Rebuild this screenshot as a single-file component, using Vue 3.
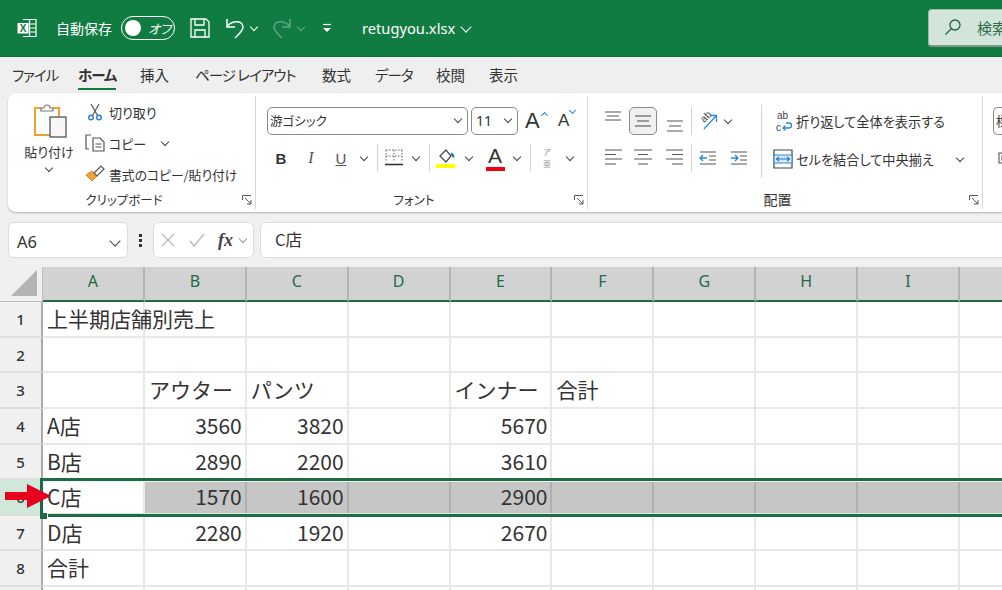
<script setup>
// tab widths keep each label at the start it has in the Excel ribbon
const tabs = [
  { label: 'ファイル', width: 66, kana: true },
  { label: 'ホーム', width: 62, kana: true, active: true },
  { label: '挿入', width: 55 },
  { label: 'ページ レイアウト', width: 127, kana: true },
  { label: '数式', width: 53 },
  { label: 'データ', width: 61, kana: true },
  { label: '校閲', width: 53 },
  { label: '表示', width: 53 }
];

const columns = ['A', 'B', 'C', 'D', 'E', 'F', 'G', 'H', 'I', 'J'];

const rows = [
  ['上半期店舗別売上'],
  [],
  ['', 'アウター', 'パンツ', '', 'インナー', '合計'],
  ['A店', 3560, 3820, '', 5670],
  ['B店', 2890, 2200, '', 3610],
  ['C店', 1570, 1600, '', 2900],
  ['D店', 2280, 1920, '', 2670],
  ['合計'],
  []
];

const SELECTED_ROW = 5;

const cellAt = (row, col) => {
  const value = rows[row][col];
  return value === undefined ? '' : value;
};
</script>

<template>
  <div class="app">
    <header class="titlebar">
      <svg class="t-excel" viewBox="0 0 20 20" width="20" height="20">
        <path d="M6 1.5h13v17H6M12.500 1.500v17M12.500 6h6.500M12.500 10h6.500M12.500 14h6.500" fill="none" stroke="#fff" stroke-width="1.200" />
        <rect x="0.500" y="5" width="11" height="10.500" fill="#fff" />
        <text x="6" y="14" text-anchor="middle" class="t-excel-x">X</text>
      </svg>
      <span class="t-autosave">自動保存</span>
      <div class="toggle">
        <i class="knob"></i>
        <span>オフ</span>
      </div>
      <svg class="t-save" viewBox="0 0 20 20" width="20" height="20">
        <path d="M1 1h15l3 3v15H1zM5 1v6h9V1M5 19v-7h10v7" fill="none" stroke="#fff" stroke-width="1.300" />
      </svg>
      <svg class="t-undo" viewBox="0 0 20 22" width="20" height="22">
        <path d="M2 2v8h8M2 10C5 4 18 2 18 10c0 4-4 7-8 11" fill="none" stroke="#fff" stroke-width="1.500" />
      </svg>
      <i class="chev chev-white t-chev1"></i>
      <svg class="t-redo" viewBox="0 0 20 22" width="20" height="22">
        <path d="M18 2v8h-8M18 10C15 4 2 2 2 10c0 4 4 7 8 11" fill="none" stroke="#5da884" stroke-width="1.500" />
      </svg>
      <i class="chev chev-dim t-chev2"></i>
      <svg class="t-qat" viewBox="0 0 10 10" width="10" height="10">
        <path d="M1 1.500h8" stroke="#fff" stroke-width="1.200" />
        <path d="M1 5h8L5 9z" fill="#fff" />
      </svg>
      <span class="t-file">retugyou.xlsx</span>
      <i class="chev chev-white chev-big t-chev3"></i>
      <div class="search">
        <svg viewBox="0 0 18 18" width="18" height="18">
          <circle cx="11" cy="7" r="5" fill="none" stroke="#24613f" stroke-width="1.300" />
          <path d="M7.500 10.500L1.500 16.500" stroke="#24613f" stroke-width="1.300" />
        </svg>
        <span>検索</span>
      </div>
    </header>

    <nav class="tabs">
      <div v-for="tab in tabs" :key="tab.label" class="tab" :style="{ width: tab.width + 'px' }">
        <span :class="{ active: tab.active, kana: tab.kana }">{{ tab.label }}</span>
      </div>
    </nav>

    <section class="ribbon">
      <div class="group g-clip">
        <div class="clip-body">
          <div class="paste">
            <svg viewBox="0 0 34 36" width="34" height="36">
              <path d="M8 4H2v27h15" fill="none" stroke="#f0a030" stroke-width="2" />
              <path d="M20 4h6v9" fill="none" stroke="#f0a030" stroke-width="2" />
              <path d="M8 7V4h3a3 3 0 0 1 6 0h3v3z" fill="#fff" stroke="#777" stroke-width="1.200" />
              <rect x="17" y="13" width="16" height="20" fill="#f7f7f7" stroke="#555" stroke-width="1.300" />
            </svg>
            <span class="paste-label">貼り付け</span>
            <i class="chev"></i>
          </div>
          <div class="clip-list">
            <div class="clip-row">
              <svg viewBox="0 0 20 18" width="20" height="18">
                <path d="M6 1l6.500 11.500M14 1L7.500 12.500" stroke="#555" stroke-width="1.200" fill="none" />
                <circle cx="6" cy="14.500" r="2.300" fill="none" stroke="#2b7cd3" stroke-width="1.400" />
                <circle cx="14" cy="14.500" r="2.300" fill="none" stroke="#2b7cd3" stroke-width="1.400" />
              </svg>
              <span>切り取り</span>
            </div>
            <div class="clip-row">
              <svg viewBox="0 0 20 18" width="20" height="18">
                <path d="M6 1H1v14h3" fill="none" stroke="#555" stroke-width="1.200" />
                <path d="M8 4h7l4 4v9H8z" fill="#fff" stroke="#555" stroke-width="1.200" />
                <path d="M10.500 10h6M10.500 13h6" stroke="#555" stroke-width="1" />
              </svg>
              <span class="copy-label">コピー</span>
              <i class="chev"></i>
            </div>
            <div class="clip-row">
              <svg viewBox="0 0 20 18" width="20" height="18">
                <path d="M1 10l6 6 5-5-5-5z" fill="#f2a13a" stroke="#d98a20" stroke-width="1" />
                <path d="M9 8l7-7 3 3-7 7z" fill="#fff" stroke="#555" stroke-width="1.200" />
              </svg>
              <span class="painter-label">書式のコピー/貼り付け</span>
            </div>
          </div>
        </div>
        <div class="foot">
          <span>クリップボード</span>
          <svg class="launcher" viewBox="0 0 10 10" width="10" height="10">
            <path d="M.5 5V.5H9M3 3l6 6M9 5v4H5" fill="none" stroke="#555" stroke-width="1" />
          </svg>
        </div>
      </div>

      <div class="group g-font">
        <div class="stack">
          <div class="row font-row1">
            <div class="select font-name"><span>游ゴシック</span><i class="chev"></i></div>
            <div class="select font-size"><span>11</span><i class="chev"></i></div>
            <div class="grow"><span class="big-a">A</span><i class="caret-up"></i></div>
            <div class="shrink"><span class="small-a">A</span><i class="caret-down"></i></div>
          </div>
          <div class="row font-row2">
            <span class="ib w30 b">B</span>
            <span class="ib w30 it">I</span>
            <span class="ib w30 un">U</span>
            <span class="ib w16"><i class="chev"></i></span>
            <i class="sep sep-a"></i>
            <span class="ib w28 ml2">
              <svg viewBox="0 0 18 18" width="18" height="18">
                <path d="M1 1h16M1 1v12M17 1v12M9 1v12M1 7h16" fill="none" stroke="#666" stroke-width="1" stroke-dasharray="1.500 1.500" />
                <path d="M0 15.500h18" stroke="#333" stroke-width="1.600" />
              </svg>
            </span>
            <span class="ib w16"><i class="chev"></i></span>
            <i class="sep sep-a"></i>
            <span class="ib w28 ml2">
              <svg viewBox="0 0 20 22" width="20" height="22">
                <path d="M4 9l6-6 5 6-5 6z" fill="#fff" stroke="#444" stroke-width="1.200" />
                <path d="M15 6.500c2 1 2.500 3 2.500 4" fill="none" stroke="#1f6fc0" stroke-width="2" />
                <rect x="0" y="17" width="19" height="4" fill="#ffff00" />
              </svg>
            </span>
            <span class="ib w18"><i class="chev"></i></span>
            <span class="ib w28 ml3 color-a">
              <span>A</span>
              <i class="color-bar"></i>
            </span>
            <span class="ib w16"><i class="chev"></i></span>
            <i class="sep sep-a"></i>
            <span class="ib w28 ml2 ruby">
              <span>ア</span>
              <span>亜</span>
            </span>
            <span class="ib w16 ml1"><i class="chev"></i></span>
          </div>
        </div>
        <div class="foot">
          <span>フォント</span>
          <svg class="launcher" viewBox="0 0 10 10" width="10" height="10">
            <path d="M.5 5V.5H9M3 3l6 6M9 5v4H5" fill="none" stroke="#555" stroke-width="1" />
          </svg>
        </div>
      </div>

      <div class="group g-align">
        <div class="align-body">
          <div class="align-left">
            <div class="row">
              <span class="ib w31 lines">
                <svg viewBox="0 0 18 28" width="18" height="28"><path d="M1 5h16M3 9h12M1 13h16" stroke="#555" stroke-width="1.100" /></svg>
              </span>
              <span class="ib w28 lines pressed">
                <svg viewBox="0 0 18 28" width="18" height="28"><path d="M1 9h16M3 14h12M1 19h16" stroke="#444" stroke-width="1.100" /></svg>
              </span>
              <span class="ib w31 lines ml2">
                <svg viewBox="0 0 18 28" width="18" height="28"><path d="M1 14h16M3 19h12M1 24h16" stroke="#555" stroke-width="1.100" /></svg>
              </span>
              <i class="sep sep-b ml1"></i>
              <span class="ib w28 ml2">
                <svg class="orient-icon" viewBox="0 0 20 20" width="20" height="20">
                  <text x="3" y="10" class="orient" transform="rotate(-45 7 7)">ab</text>
                  <path d="M6 18L18 5M12 4.500h6.500V11" fill="none" stroke="#2b88d8" stroke-width="1.300" />
                </svg>
              </span>
              <span class="ib w16 mln2"><i class="chev"></i></span>
            </div>
            <div class="row">
              <span class="ib w31 lines">
                <svg viewBox="0 0 18 28" width="18" height="28"><path d="M1 6h17M1 10.500h11M1 15h17M1 20h11" stroke="#555" stroke-width="1.100" /></svg>
              </span>
              <span class="ib w28 lines ml1">
                <svg viewBox="0 0 18 28" width="18" height="28"><path d="M0 6h18M4 10.500h10M0 15h18M4 20h10" stroke="#555" stroke-width="1.100" /></svg>
              </span>
              <span class="ib w31 lines ml2">
                <svg viewBox="0 0 18 28" width="18" height="28"><path d="M0 6h17M6 10.500h11M0 15h17M6 20h11" stroke="#555" stroke-width="1.100" /></svg>
              </span>
              <i class="sep sep-b ml1"></i>
              <span class="ib w28 ml2">
                <svg viewBox="0 0 18 18" width="18" height="18">
                  <path d="M1 9h7M4 6L1 9l3 3" fill="none" stroke="#2b88d8" stroke-width="1.400" />
                  <path d="M1 3h16M10 7h7M10 11h7M1 15h16" stroke="#555" stroke-width="1" />
                </svg>
              </span>
              <span class="ib w18 ml8">
                <svg viewBox="0 0 18 18" width="18" height="18">
                  <path d="M1 9h7M5 6l3 3-3 3" fill="none" stroke="#2b88d8" stroke-width="1.400" />
                  <path d="M1 3h16M10 7h7M10 11h7M1 15h16" stroke="#555" stroke-width="1" />
                </svg>
              </span>
            </div>
          </div>
          <i class="sep sep-c"></i>
          <div class="align-right">
            <div class="row wrap-row">
              <svg viewBox="0 0 20 20" width="20" height="20">
                <text x="4" y="8" class="wrap-ab">ab</text>
                <text x="3" y="19.500" class="wrap-ab">c</text>
                <path d="M13 12h3a2.500 2.500 0 0 1 0 5h-6M12.500 14.500L10 17l2.500 2.500" fill="none" stroke="#2b88d8" stroke-width="1.300" />
              </svg>
              <span>折り返して全体を表示する</span>
            </div>
            <div class="row merge-row">
              <svg viewBox="0 0 20 20" width="20" height="20">
                <path d="M1 1h18v18H1z" fill="none" stroke="#444" stroke-width="1.200" />
                <rect x="1" y="6" width="18" height="8" fill="#d6e9f8" stroke="#2b88d8" stroke-width="1" />
                <path d="M3.500 10h13M6 7.800L3.500 10 6 12.200M14 7.800l2.500 2.200-2.500 2.200" fill="none" stroke="#1f6fc0" stroke-width="1.100" />
              </svg>
              <span>セルを結合して中央揃え</span>
              <i class="chev"></i>
            </div>
          </div>
        </div>
        <div class="foot">
          <span class="foot-kanji">配置</span>
          <svg class="launcher" viewBox="0 0 10 10" width="10" height="10">
            <path d="M.5 5V.5H9M3 3l6 6M9 5v4H5" fill="none" stroke="#555" stroke-width="1" />
          </svg>
        </div>
      </div>

      <div class="group g-next">
        <div class="stack">
          <div class="select next-select"><span>標準</span></div>
          <svg class="next-icon" viewBox="0 0 12 12" width="12" height="12">
            <path d="M1 1h10v10H1zM4 4h4v4H4z" fill="none" stroke="#555" stroke-width="1.100" />
          </svg>
        </div>
      </div>
    </section>

    <section class="formula">
      <div class="name-box">
        <span>A6</span>
        <i class="chev chev-big"></i>
      </div>
      <div class="dots"><i></i><i></i><i></i></div>
      <div class="fx-box">
        <svg viewBox="0 0 14 14" width="14" height="14"><path d="M1 1l12 12M13 1L1 13" stroke="#b9b9b9" stroke-width="1.300" /></svg>
        <svg viewBox="0 0 16 14" width="16" height="14"><path d="M1 8l4 5L15 1" fill="none" stroke="#b9b9b9" stroke-width="1.300" /></svg>
        <span class="fx">fx</span>
        <i class="chev chev-grey"></i>
      </div>
      <div class="formula-input">C店</div>
    </section>

    <section class="sheet">
      <div class="corner">
        <svg viewBox="0 0 26 26" width="26" height="26"><path d="M26 0v26H0z" fill="#b4b4b4" /></svg>
      </div>
      <div v-for="col in columns" :key="col" class="col-head">{{ col }}</div>
      <template v-for="(row, r) in rows" :key="r">
        <div class="row-head" :class="{ current: r === SELECTED_ROW }">{{ r + 1 }}</div>
        <div
          v-for="(col, c) in columns"
          :key="col"
          class="cell"
          :class="{
            num: typeof cellAt(r, c) === 'number',
            sel: r === SELECTED_ROW && c > 0
          }"
        >{{ cellAt(r, c) }}</div>
      </template>
      <div class="selection">
        <i class="handle"></i>
      </div>
    </section>

    <svg class="arrow" viewBox="0 0 46 24" width="46" height="24">
      <path d="M0 8h22V0l24 12-24 12v-8H0z" fill="#e60020" />
    </svg>
  </div>
</template>

<style scoped>
.app {
  position: relative;
  width: 1002px;
  height: 590px;
  overflow: hidden;
  background: #f0f0f0;
  font-family: "Noto Sans CJK JP", "Noto Sans", sans-serif;
  font-feature-settings: "palt";
  color: #333;
  display: flex;
  flex-direction: column;
}

/* title bar */
.titlebar {
  flex: none;
  height: 57px;
  background: #107c41;
  border-bottom: 1px solid #0d6b38;
  box-sizing: border-box;
  display: flex;
  align-items: center;
  padding-left: 17px;
  color: #fff;
}
.t-excel-x {
  font: bold 10px "Liberation Sans", sans-serif;
  fill: #107c41;
}
.t-autosave {
  margin-left: 19px;
  font-size: 14px;
  width: 65px;
  white-space: nowrap;
}
.toggle {
  box-sizing: border-box;
  width: 54px;
  height: 24px;
  border: 1.500px solid #fff;
  border-radius: 12px;
  display: flex;
  align-items: center;
  padding-left: 3px;
  font-size: 13px;
  font-style: italic;
  white-space: nowrap;
}
.knob {
  flex: none;
  width: 16px;
  height: 16px;
  border-radius: 50%;
  background: #fff;
  margin-right: 7px;
}
.t-save {
  margin-left: 15px;
}
.t-undo {
  margin-left: 15px;
}
.t-chev1 {
  margin-left: 6px;
}
.t-redo {
  margin-left: 15px;
}
.t-chev2 {
  margin-left: 6px;
}
.t-qat {
  margin-left: 18px;
}
.t-file {
  margin-left: 30px;
  font-family: "Noto Sans", sans-serif;
  font-size: 14.700px;
  white-space: nowrap;
}
.t-chev3 {
  margin-left: 7px;
}
.search {
  margin-left: auto;
  margin-right: -30px;
  flex: none;
  box-sizing: border-box;
  width: 104px;
  height: 38px;
  margin-top: -1px;
  background: #d3e5da;
  border: 1px solid #9fb8a9;
  border-bottom: 2px solid #7d9687;
  border-radius: 4px;
  display: flex;
  align-items: center;
  padding-left: 15px;
  gap: 15px;
  color: #2f6b4b;
  font-size: 15px;
  white-space: nowrap;
}

/* tabs */
.tabs {
  flex: none;
  height: 36px;
  display: flex;
  padding-left: 12px;
  font-size: 14.500px;
  background: #efefef;
}
.tab {
  flex: none;
  white-space: nowrap;
  line-height: 36px;
}
.tab span {
  position: relative;
  display: inline-block;
  height: 36px;
}
.tab span.kana {
  letter-spacing: -1px;
}
.tab span.active {
  font-weight: 700;
}
.tab span.active::after {
  content: "";
  position: absolute;
  left: 0;
  right: 0;
  bottom: 3px;
  height: 2px;
  background: #107c41;
}

/* ribbon */
.ribbon {
  flex: none;
  height: 119px;
  margin-left: 8px;
  background: #fff;
  border-radius: 8px 0 0 8px;
  box-shadow: 0 1px 2px rgba(0, 0, 0, 0.25);
  display: flex;
  font-size: 13px;
}
.group {
  position: relative;
  box-sizing: border-box;
  flex: none;
  display: flex;
  flex-direction: column;
  height: 113px;
  margin-top: 3px;
  border-right: 1px solid #d9d9d9;
}
.g-clip {
  width: 248px;
}
.g-font {
  width: 332px;
}
.g-align {
  width: 395px;
}
.g-next {
  width: 40px;
  border-right: none;
}
.foot {
  position: absolute;
  left: 0;
  right: 0;
  bottom: -1px;
  height: 22px;
  display: flex;
  align-items: center;
  padding-right: 3px;
  font-size: 12.500px;
}
.foot span {
  flex: 1;
  text-align: center;
  padding-right: 2px;
  white-space: nowrap;
}
.foot span.foot-kanji {
  font-size: 14px;
}
.launcher {
  flex: none;
  margin-top: 2px;
}
.row {
  display: flex;
  align-items: center;
}
.stack {
  display: flex;
  flex-direction: column;
  gap: 9px;
  padding: 11px 0 0 10px;
}

/* chevrons */
.chev {
  display: block;
  flex: none;
  width: 5px;
  height: 5px;
  border-right: 1.300px solid #444;
  border-bottom: 1.300px solid #444;
  transform: translateY(-1px) rotate(45deg);
}
.chev-white {
  border-color: #fff;
}
.chev-dim {
  border-color: #5da884;
}
.chev-grey {
  border-color: #999;
}
.chev-big {
  width: 7px;
  height: 7px;
}

/* clipboard */
.clip-body {
  display: flex;
  padding-top: 3px;
}
.paste {
  width: 80px;
  display: flex;
  flex-direction: column;
  align-items: center;
  padding-left: 2px;
  box-sizing: border-box;
}
.paste svg {
  margin-left: 1px;
  margin-top: 5px;
}
.paste-label {
  margin-top: 3px;
  white-space: nowrap;
  line-height: 18px;
}
.paste .chev {
  margin-top: 5px;
}
.clip-list {
  display: flex;
  flex-direction: column;
  gap: 9px;
  padding-top: 2px;
}
.clip-row {
  height: 22px;
  display: flex;
  align-items: center;
  gap: 4px;
  white-space: nowrap;
  margin-left: -3px;
}
.copy-label {
  width: 49px;
}
.painter-label {
  font-size: 12.800px;
}

/* font */
.font-row1 {
  height: 28px;
}
.select {
  box-sizing: border-box;
  height: 28px;
  border: 1px solid #8a8a8a;
  border-radius: 5px;
  display: flex;
  align-items: center;
  justify-content: space-between;
  padding: 0 6px 2px 2px;
  white-space: nowrap;
}
.font-name {
  width: 201px;
  margin-left: 1px;
  font-size: 12.500px;
}
.font-size {
  width: 47px;
  margin-left: 3px;
  font-family: "Noto Sans", sans-serif;
  font-size: 14px;
  padding-left: 4px;
}
.grow,
.shrink {
  position: relative;
  display: flex;
}
.grow {
  margin-left: 7px;
  width: 28px;
}
.shrink {
  margin-left: 5px;
  width: 20px;
}
.big-a {
  font: 22px/28px "Liberation Sans", sans-serif;
}
.small-a {
  font: 17px/30px "Liberation Sans", sans-serif;
}
.caret-up,
.caret-down {
  width: 4px;
  height: 4px;
  border-left: 1.300px solid #2b88d8;
  border-top: 1.300px solid #2b88d8;
  transform: rotate(45deg);
  margin: 6px 0 0 2px;
}
.caret-down {
  transform: rotate(225deg);
  margin: 2px 0 0 1px;
}
.font-row2 {
  height: 28px;
}
.ib {
  flex: none;
  display: flex;
  align-items: center;
  justify-content: center;
  height: 28px;
  box-sizing: border-box;
}
.w16 { width: 16px; }
.w18 { width: 18px; }
.w28 { width: 28px; }
.w30 { width: 30px; }
.w31 { width: 31px; }
.ml1 { margin-left: 1px; }
.ml2 { margin-left: 2px; }
.ml3 { margin-left: 3px; }
.ml8 { margin-left: 8px; }
.mln2 { margin-left: -2px; }
.b {
  font: bold 15px "Liberation Sans", sans-serif;
}
.it {
  font: italic 16px "Liberation Serif", serif;
  color: #555;
}
.un {
  font: 15px "Liberation Sans", sans-serif;
  text-decoration: underline;
  color: #555;
}
.sep {
  flex: none;
  display: block;
  width: 1px;
  background: #d4d4d4;
}
.sep-a {
  height: 28px;
  margin-left: 5px;
}
.sep-b {
  height: 28px;
}
.sep-c {
  height: 73px;
  margin-left: 10px;
}
.color-a,
.ruby {
  flex-direction: column;
}
.color-a span {
  font: 21px/20px "Liberation Sans", sans-serif;
}
.color-bar {
  display: block;
  width: 19px;
  height: 4px;
  background: #f00010;
  margin-top: 1px;
}
.ruby {
  color: #999;
  font-size: 8px;
  line-height: 12px;
}

/* alignment */
.align-body {
  display: flex;
  padding-top: 9px;
}
.align-left {
  box-sizing: border-box;
  display: flex;
  flex-direction: column;
  gap: 9px;
  width: 163px;
  padding: 2px 0 0 9px;
}
.lines.pressed {
  background: #f0f0f0;
  border: 1px solid #8a8a8a;
  border-radius: 5px;
  margin-left: 1px;
}
.orient-icon {
  overflow: visible;
}
.orient {
  font: 10px "Liberation Sans", sans-serif;
  fill: #444;
}
.align-right {
  display: flex;
  flex-direction: column;
  gap: 14px;
  padding-left: 11px;
  padding-top: 4px;
  font-size: 13.200px;
  white-space: nowrap;
}
.wrap-row,
.merge-row {
  gap: 3px;
  height: 24px;
}
.wrap-ab {
  font: 10px "Liberation Sans", sans-serif;
  fill: #444;
}
.merge-row .chev {
  margin-left: 20px;
}

/* next group */
.next-select {
  width: 40px;
  border-radius: 5px 0 0 5px;
  border-right: none;
}
.next-icon {
  margin: 8px 0 0 5px;
}

/* formula bar */
.formula {
  flex: none;
  display: flex;
  align-items: stretch;
  height: 36px;
  margin: 10px 0 9px 8px;
}
.name-box,
.fx-box,
.formula-input {
  box-sizing: border-box;
  background: #fff;
  border: 1px solid #dcdcdc;
  border-radius: 6px;
}
.name-box {
  width: 120px;
  display: flex;
  align-items: center;
  justify-content: space-between;
  padding: 3px 8px 0 8px;
  font: 16.500px "Noto Sans", sans-serif;
}
.dots {
  width: 25px;
  display: flex;
  flex-direction: column;
  align-items: center;
  justify-content: center;
  gap: 2px;
}
.dots i {
  display: block;
  width: 3px;
  height: 3px;
  background: #333;
}
.fx-box {
  width: 101px;
  display: flex;
  align-items: center;
  padding-left: 7px;
  gap: 14px;
}
.fx {
  font: italic bold 18px "Liberation Serif", serif;
  color: #444;
  margin-left: -1px;
}
.fx-box .chev {
  margin-left: -7px;
}
.formula-input {
  margin-left: 6px;
  flex: 1;
  margin-right: -10px;
  padding-left: 14px;
  line-height: 33px;
  font-size: 16.500px;
}

/* sheet */
.sheet {
  position: relative;
  flex: none;
  display: grid;
  grid-template-columns: 43px repeat(10, 101.900px);
  grid-template-rows: 35px;
  grid-auto-rows: 35.650px;
  background: #fff;
}
.corner {
  box-sizing: border-box;
  background: #f0f0f0;
  border-right: 1px solid #bdbdbd;
  border-bottom: 1px solid #bdbdbd;
  display: flex;
  align-items: center;
  justify-content: flex-end;
  padding: 0 5px 2px 0;
}
.col-head {
  box-sizing: border-box;
  background: #d2d2d2;
  border-right: 2px solid #b4b4b4;
  border-bottom: 2px solid #1d6b45;
  text-align: center;
  color: #1f6b45;
  font: 16px/28px "Noto Sans", sans-serif;
}
.row-head {
  box-sizing: border-box;
  background: #f0f0f0;
  border-right: 2px solid #a9a9a9;
  border-bottom: 2px solid #dedede;
  text-align: center;
  font: 500 15px/34px "Noto Sans", sans-serif;
  color: #333;
}
.row-head.current {
  background: #cfe8d9;
}
.cell {
  box-sizing: border-box;
  border-right: 2px solid #e8e8e8;
  border-bottom: 2px solid #e8e8e8;
  padding: 0 3px 0 4px;
  font-size: 21px;
  font-feature-settings: normal;
  line-height: 33px;
  white-space: nowrap;
  color: #333;
}
.cell.num {
  text-align: right;
}
.cell.sel {
  background: #c6c6c6;
  border-right-color: #b0b0b0;
  border-bottom-color: #c6c6c6;
}
.selection {
  position: absolute;
  left: 40px;
  top: 211px;
  right: -10px;
  height: 39px;
  box-sizing: border-box;
  border: solid #1d6b45;
  border-width: 3px 0 3px 3px;
  box-shadow: inset 0 1px 0 #eef5f0, inset 0 -1px 0 #dcebe2;
  pointer-events: none;
}
.handle {
  position: absolute;
  left: -3px;
  bottom: -5px;
  width: 7px;
  height: 6px;
  background: #1d6b45;
  border-right: 1px solid #fff;
}

.arrow {
  position: absolute;
  left: 5px;
  top: 484px;
}
</style>

<style>
html,
body {
  margin: 0;
  overflow: hidden;
}
</style>
